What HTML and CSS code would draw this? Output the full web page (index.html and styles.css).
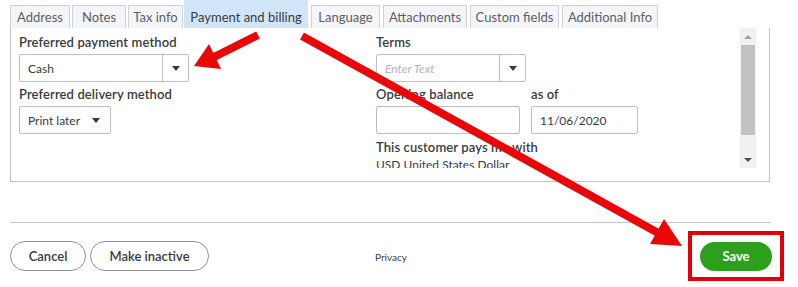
FILE: index.html
```html
<!DOCTYPE html>
<html lang="en">
<head>
<meta charset="utf-8">
<title>Customer - Payment and billing</title>
<link rel="stylesheet" href="styles.css">
</head>
<body>
<div class="page">
  <div class="tabs">
    <div class="tab t-address">Address</div>
    <div class="tab t-notes">Notes</div>
    <div class="tab t-tax">Tax info</div>
    <div class="tab active">Payment and billing</div>
    <div class="tab t-lang">Language</div>
    <div class="tab t-attach">Attachments</div>
    <div class="tab t-custom">Custom fields</div>
    <div class="tab t-add">Additional Info</div>
  </div>
  <div class="panel">
    <div class="scroll">
      <div class="cols">
        <div class="col">
          <div class="label">Preferred payment method</div>
          <div class="select pay">
            <span class="value">Cash</span>
            <span class="btn"><span class="caret"></span></span>
          </div>
          <div class="label gap">Preferred delivery method</div>
          <div class="select delivery">
            <span class="value">Print later</span>
            <span class="caret"></span>
          </div>
        </div>
        <div class="col">
          <div class="label">Terms</div>
          <div class="select terms">
            <span class="value placeholder">Enter Text</span>
            <span class="btn"><span class="caret"></span></span>
          </div>
          <div class="pair gap">
            <div>
              <div class="label">Opening balance</div>
              <div class="input balance"></div>
            </div>
            <div>
              <div class="label">as of</div>
              <div class="input date">11/06/2020</div>
            </div>
          </div>
          <div class="label currency-label">This customer pays me with</div>
          <div class="currency">USD United States Dollar</div>
        </div>
      </div>
      <div class="scrollbar">
        <span class="sb-up"></span>
        <span class="sb-thumb"></span>
        <span class="sb-down"></span>
      </div>
    </div>
  </div>
  <div class="footer">
    <div class="left">
      <button class="pill">Cancel</button>
      <button class="pill">Make inactive</button>
    </div>
    <div class="privacy">Privacy</div>
    <button class="save">Save</button>
  </div>
</div>
<div class="highlight"></div>
<svg class="annotations" width="798" height="287" viewBox="0 0 798 287">
  <line x1="258" y1="35" x2="212" y2="58" stroke="#e8080a" stroke-width="8"/>
  <polygon points="194,66 209,44 221,69" fill="#e8080a"/>
  <line x1="302" y1="36" x2="660" y2="234" stroke="#e8080a" stroke-width="8"/>
  <polygon points="682,246 650,244 664,219" fill="#e8080a"/>
</svg>
</body>
</html>
```
FILE: styles.css
```css
* { box-sizing: border-box; }
html, body { margin: 0; padding: 0; background: #fff; }
body {
  font-family: Lato, "Open Sans", sans-serif;
  color: #393a3d;
  width: 798px;
  height: 287px;
  overflow: hidden;
  position: relative;
}
.page { display: flex; flex-direction: column; }

.tabs {
  display: flex;
  align-items: flex-end;
  gap: 2px;
  height: 28px;
  padding-left: 10px;
}
.tab {
  height: 23px;
  padding: 0;
  text-align: center;
  font-size: 13px;
  line-height: 22px;
  color: #5d5e63;
  background: #f4f5f8;
  border: 1px solid #cfd1d5;
  border-bottom: none;
  white-space: nowrap;
}
.t-address { width: 60px; }
.t-notes { width: 54px; }
.t-tax { width: 55px; }
.t-lang { width: 69px; margin-left: 1px; }
.t-attach { width: 84px; margin-left: 1px; }
.t-custom { width: 89px; margin-left: 1px; }
.t-add { width: 96px; margin-left: 1px; }
.tab.active {
  width: 124px;
  margin-left: -1px;
  height: 28px;
  line-height: 33px;
  background: #d1e5f8;
  border-color: #d1e5f8;
  color: #393a3d;
}

.panel {
  width: 760px;
  margin-left: 10px;
  height: 154px;
  border: 1px solid #bfc1c5;
  border-top: none;
}
.scroll {
  height: 140px;
  display: flex;
  overflow: hidden;
}
.cols {
  flex: 1;
  display: grid;
  grid-template-columns: 357px 1fr;
  padding: 6px 0 0 8px;
}
.label {
  font-size: 13px;
  font-weight: 600;
  color: #393a3d;
  line-height: 17px;
  height: 17px;
  margin-bottom: 3px;
  letter-spacing: 0.1px;
}
.gap { margin-top: 4px; }
.select, .input {
  height: 28px;
  border: 1px solid #babec5;
  border-radius: 2px;
  display: flex;
  align-items: center;
  font-size: 12px;
  color: #393a3d;
}
.select .value { flex: 1; padding-left: 8px; }
.select .btn {
  width: 26px;
  height: 100%;
  border-left: 1px solid #babec5;
  display: flex;
  align-items: center;
  justify-content: center;
}
.caret {
  width: 0; height: 0;
  border-left: 4px solid transparent;
  border-right: 4px solid transparent;
  border-top: 5px solid #393a3d;
}
.pay { width: 170px; }
.delivery { width: 92px; padding-right: 10px; }
.delivery .value { padding-left: 8px; }
.terms { width: 150px; }
.placeholder { color: #b0b3b8; font-style: italic; }
.pair { display: flex; gap: 11px; }
.balance { width: 144px; }
.date { width: 107px; padding-left: 8px; }
.currency-label { margin-top: 5px; margin-bottom: 1px; }
.currency { font-size: 12px; line-height: 16px; }

.scrollbar {
  width: 16px;
  margin-right: 13px;
  background: #f1f1f1;
  display: flex;
  flex-direction: column;
  align-items: center;
}
.sb-up, .sb-down {
  height: 17px;
  display: flex;
  align-items: center;
  justify-content: center;
}
.sb-up::after {
  content: "";
  border-left: 4px solid transparent;
  border-right: 4px solid transparent;
  border-bottom: 4px solid #a3a3a3;
}
.sb-down::after {
  content: "";
  border-left: 4px solid transparent;
  border-right: 4px solid transparent;
  border-top: 4px solid #505050;
}
.sb-thumb {
  flex: 1;
  width: 14px;
  background: #c1c1c1;
  margin: 0 0 16px;
}

.footer {
  margin-top: 40px;
  margin-left: 10px;
  width: 761px;
  border-top: 1px solid #c4c6ca;
  padding-top: 18px;
  display: grid;
  grid-template-columns: 365px 1fr auto;
  align-items: center;
}
.left { display: flex; gap: 4px; }
.pill {
  font-family: inherit;
  height: 30px;
  border: 1px solid #8d9096;
  border-radius: 15px;
  background: #fff;
  color: #393a3d;
  font-size: 13px;
  font-weight: 600;
  padding: 0 15px;
}
.pill:first-child { width: 76px; }
.pill:last-child { width: 119px; }
.privacy { font-size: 10px; color: #393a3d; padding-top: 2px; }
.save {
  font-family: inherit;
  width: 72px;
  height: 29px;
  margin-right: -1px;
  border: none;
  border-radius: 15px;
  background: #2ca01c;
  color: #fff;
  font-size: 13px;
  font-weight: 700;
}

.highlight {
  position: absolute;
  left: 688px;
  top: 231px;
  width: 96px;
  height: 50px;
  border: 4px solid #e3000b;
}
.annotations {
  position: absolute;
  left: 0;
  top: 0;
  pointer-events: none;
}
```
